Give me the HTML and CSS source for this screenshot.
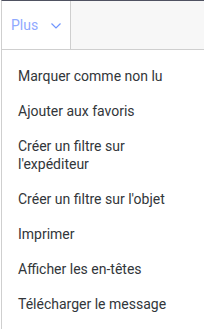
FILE: index.html
```html
<!DOCTYPE html>
<html lang="fr">
<head>
    <meta charset="UTF-8">
    <meta name="viewport" content="width=device-width, initial-scale=1.0">
    <title>Plus</title>
    <link rel="stylesheet" href="styles.css">
</head>
<body>
    <div class="topbar">
        <div class="tab">
            <span class="tab-label">Plus</span>
            <svg class="chevron" width="10" height="6" viewBox="0 0 10 6">
                <path d="M0.5 0.5 L5 5 L9.5 0.5" fill="none" stroke="#6f95ff" stroke-width="1.2"/>
            </svg>
        </div>
        <div class="filler"></div>
    </div>
    <ul class="menu">
        <li>Marquer comme non lu</li>
        <li>Ajouter aux favoris</li>
        <li>Créer un filtre sur l'expéditeur</li>
        <li>Créer un filtre sur l'objet</li>
        <li>Imprimer</li>
        <li>Afficher les en-têtes</li>
        <li>Télécharger le message</li>
    </ul>
</body>
</html>
```
FILE: styles.css
```css
body{
    margin: 0;
    font-family: Roboto, sans-serif;
    background: #fff;
}
.topbar{
    display: flex;
    height: 48px;
    border-top: 1px solid #4f5261;
    border-bottom: 1px solid #cfcfcf;
    margin-left: 1px;
    border-left: 1px solid #cfcfcf;
}
.tab{
    width: 59px;
    padding-left: 9px;
    display: flex;
    align-items: center;
    border-right: 1px solid #cfcfcf;
    background: #fff;
}
.tab-label{
    font-size: 14px;
    color: #8fa9ff;
}
.chevron{
    margin-left: 13px;
    margin-top: 2px;
}
.filler{
    flex: 1;
    background: #f7f7f7;
}
.menu{
    list-style: none;
    margin: 0 0 0 1px;
    padding: 9px 16px 0 16px;
    border-left: 1px solid #cfcfcf;
    height: 271px;
}
.menu li{
    font-size: 14px;
    line-height: 18px;
    color: #32363a;
    padding: 8px 0 9px;
    width: 160px;
}
```
